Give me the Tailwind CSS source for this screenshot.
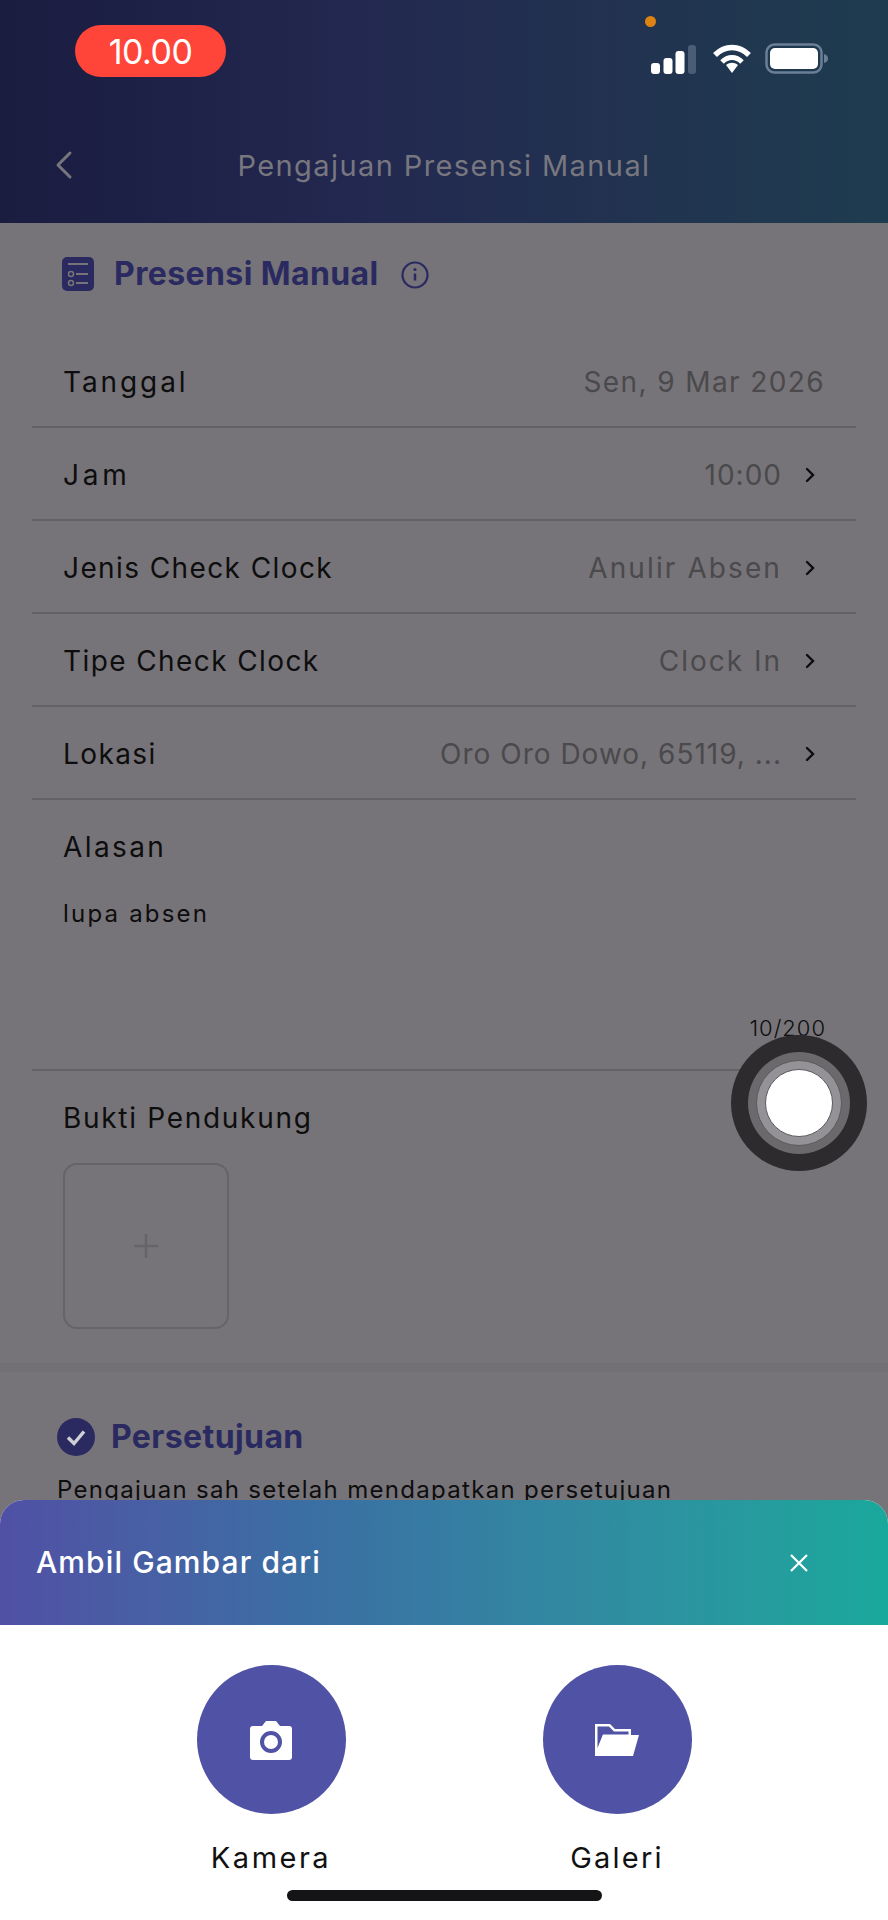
<!DOCTYPE html>
<html lang="en">
<head>
    <meta charset="UTF-8">
    <meta name="viewport" content="width=device-width, initial-scale=1.0">
    <title>Pengajuan Presensi Manual</title>
    <script src="https://cdn.jsdelivr.net/npm/@tailwindcss/browser@4"></script>
</head>
<body class="font-['Inter',sans-serif]">
<div class="relative w-[888px] h-[1920px] overflow-hidden bg-[#767478] text-[#0d0d0e]">

    <!-- Header -->
    <header class="h-[223px] bg-gradient-to-r from-[#1a1c40] via-[#232850] via-40% to-[#1e3c4f]">
        <div class="flex justify-between pl-[75px] pr-[60px] pt-[25px] h-[142px]">
            <div class="w-[151px] h-[52px] rounded-[26px] bg-[#ff453a] text-white text-[34px] flex items-center justify-center tracking-[-0.5px]">10.00</div>
            <div class="relative flex items-end gap-[14px] h-[49px]">
                <span class="absolute left-[-6px] top-[-9px] w-[11px] h-[11px] rounded-full bg-[#dd8213]"></span>
                <svg class="mr-[3px]" width="45" height="29" viewBox="0 0 45 29"><rect x="0" y="18" width="9" height="11" rx="3" fill="#fff"/><rect x="12.500" y="13" width="9" height="16" rx="3" fill="#fff"/><rect x="24.500" y="6" width="9" height="23" rx="3" fill="#fff"/><rect x="37" y="0" width="8" height="29" rx="3" fill="#4a5d74"/></svg>
                <svg width="38" height="30" viewBox="0 0 38 30"><path d="M2 11C12 1 26 1 36 11" stroke="#fff" stroke-width="5.500" fill="none"/><path d="M9 18c6-6 14-6 20 0" stroke="#fff" stroke-width="5" fill="none"/><path d="M13 21c4-3 8-3 12 0l-6 8z" fill="#fff"/></svg>
                <svg width="63" height="31" viewBox="0 0 63 31"><rect x="1.500" y="1.500" width="55" height="28" rx="8" fill="none" stroke="#6b7f95" stroke-width="2.500"/><rect x="5" y="5" width="48" height="21" rx="5" fill="#fff"/><path d="M59 11c3 1 4 2.500 4 4.500s-1 3.500-4 4.500z" fill="#6b7f95"/></svg>
            </div>
        </div>
        <div class="relative flex justify-center items-center h-[48px]">
            <svg class="absolute left-[54px] top-[8px]" width="20" height="30" viewBox="0 0 20 30"><path d="M16 3L4 15l12 12" stroke="#77767d" stroke-width="3" fill="none" stroke-linecap="round" stroke-linejoin="round"/></svg>
            <h1 class="text-[29px] tracking-[1.4px] text-[#78777f]">Pengajuan Presensi Manual</h1>
        </div>
    </header>

    <!-- Form card -->
    <section class="h-[1140px]">
        <div class="flex items-center pl-[62px] pt-[18px] h-[84px]">
            <svg width="32" height="34" viewBox="0 0 32 34"><rect width="32" height="34" rx="5" fill="#2a2a61"/><path d="M6 7h20M14 17h12M14 26h12" stroke="#767478" stroke-width="2"/><circle cx="9" cy="17" r="2.500" fill="none" stroke="#767478" stroke-width="1.500"/><circle cx="9" cy="26" r="2.500" fill="none" stroke="#767478" stroke-width="1.500"/></svg>
            <h2 class="ml-[20px] text-[32px] font-bold tracking-[0.4px] text-[#2a2a61]">Presensi Manual</h2>
            <svg class="ml-[22px] mt-[2px]" width="28" height="28" viewBox="0 0 28 28"><circle cx="14" cy="14" r="12.500" fill="none" stroke="#2a2a61" stroke-width="2.200"/><path d="M14 12.500v7" stroke="#2a2a61" stroke-width="2.500"/><circle cx="14" cy="8.500" r="1.600" fill="#2a2a61"/></svg>
        </div>

        <div class="mx-[32px] mt-[28px] text-[28px] tracking-[1.4px]">
            <div class="h-[93px] pt-[3px] flex items-center justify-between border-b-2 border-[#646266] px-[31px]">
                <span class="tracking-[2.900px]">Tanggal</span>
                <span class="text-[#4a494c]">Sen, 9 Mar 2026</span>
            </div>
            <div class="h-[93px] pt-[3px] flex items-center justify-between border-b-2 border-[#646266] px-[31px]">
                <span class="tracking-[3.800px]">Jam</span>
                <span class="flex items-center text-[#4a494c] tracking-[1px]">10:00
                    <svg class="ml-[22px] mr-[9px]" width="12" height="18" viewBox="0 0 12 18"><path d="M3 3l6 6-6 6" stroke="#0d0d0e" stroke-width="2.400" fill="none" stroke-linecap="round"/></svg>
                </span>
            </div>
            <div class="h-[93px] pt-[3px] flex items-center justify-between border-b-2 border-[#646266] px-[31px]">
                <span>Jenis Check Clock</span>
                <span class="flex items-center text-[#4a494c] tracking-[2.100px]">Anulir Absen
                    <svg class="ml-[22px] mr-[9px]" width="12" height="18" viewBox="0 0 12 18"><path d="M3 3l6 6-6 6" stroke="#0d0d0e" stroke-width="2.400" fill="none" stroke-linecap="round"/></svg>
                </span>
            </div>
            <div class="h-[93px] pt-[3px] flex items-center justify-between border-b-2 border-[#646266] px-[31px]">
                <span>Tipe Check Clock</span>
                <span class="flex items-center text-[#4a494c] tracking-[2px]">Clock In
                    <svg class="ml-[22px] mr-[9px]" width="12" height="18" viewBox="0 0 12 18"><path d="M3 3l6 6-6 6" stroke="#0d0d0e" stroke-width="2.400" fill="none" stroke-linecap="round"/></svg>
                </span>
            </div>
            <div class="h-[93px] pt-[3px] flex items-center justify-between border-b-2 border-[#646266] px-[31px]">
                <span>Lokasi</span>
                <span class="flex items-center text-[#4a494c] tracking-[1px]">Oro Oro Dowo, 65119, ...
                    <svg class="ml-[22px] mr-[9px]" width="12" height="18" viewBox="0 0 12 18"><path d="M3 3l6 6-6 6" stroke="#0d0d0e" stroke-width="2.400" fill="none" stroke-linecap="round"/></svg>
                </span>
            </div>
            <div class="h-[271px] border-b-2 border-[#646266] px-[31px] pt-[26px]">
                <div class="tracking-[2.400px]">Alasan</div>
                <p class="mt-[28px] text-[24px] tracking-[2.200px]">lupa absen</p>
                <p class="mt-[80px] text-right text-[22px] font-light tracking-[1px] mr-[-1px]">10/200</p>
            </div>
            <div class="px-[31px] pt-[26px]">
                <div class="tracking-[1.700px]">Bukti Pendukung</div>
                <div class="mt-[24px] w-[166px] h-[166px] rounded-[14px] border-2 border-[#666468] flex items-center justify-center">
                    <svg width="26" height="26" viewBox="0 0 26 26"><path d="M13 1v24M1 13h24" stroke="#666468" stroke-width="2.500"/></svg>
                </div>
            </div>
        </div>
    </section>
    <div class="h-[9px] bg-[#727074]"></div>

    <!-- Persetujuan -->
    <section class="pl-[57px] pt-[41px]">
        <div class="flex items-center">
            <svg width="38" height="38" viewBox="0 0 38 38"><circle cx="19" cy="19" r="19" fill="#2a2a61"/><path d="M11 19.500l6 6 10-12" stroke="#cfcfd6" stroke-width="3.500" fill="none"/></svg>
            <h2 class="ml-[16px] text-[32px] font-bold tracking-[0.4px] text-[#2a2a61]">Persetujuan</h2>
        </div>
        <p class="mt-[11px] text-[24px] tracking-[1.300px]">Pengajuan sah setelah mendapatkan persetujuan</p>
    </section>

    <!-- Assistive touch -->
    <div class="absolute left-[731px] top-[1035px] w-[136px] h-[136px] rounded-full bg-[#2d2b2e] flex items-center justify-center">
        <div class="w-[102px] h-[102px] rounded-full bg-[#6b696c] flex items-center justify-center">
            <div class="w-[86px] h-[86px] rounded-full bg-[#949296] border border-[#5c5a5d] flex items-center justify-center">
                <div class="w-[68px] h-[68px] rounded-full bg-white border border-[#5c5a5d]"></div>
            </div>
        </div>
    </div>

    <!-- Bottom sheet -->
    <div class="absolute left-0 right-0 top-[1500px] bottom-0 bg-white rounded-t-[24px] overflow-hidden">
        <div class="h-[125px] bg-gradient-to-r from-[#5050a5] via-[#3a6fa3] via-35% to-[#19a89c] flex items-center justify-between pl-[36px] pr-[79px] text-white">
            <span class="text-[30px] font-medium tracking-[1.100px]">Ambil Gambar dari</span>
            <svg width="20" height="20" viewBox="0 0 20 20"><path d="M2 2l16 16M18 2L2 18" stroke="#fff" stroke-width="2.200"/></svg>
        </div>
        <div class="flex justify-center gap-[197px] pt-[40px]">
            <div class="w-[149px] flex flex-col items-center">
                <div class="w-[149px] h-[149px] rounded-full bg-[#4f52a5] flex items-center justify-center">
                    <svg width="42" height="40" viewBox="0 0 42 40"><path d="M3 6h9l4-5h10l4 5h9a3 3 0 0 1 3 3v28a3 3 0 0 1-3 3H3a3 3 0 0 1-3-3V9a3 3 0 0 1 3-3z" fill="#fff"/><circle cx="21" cy="22" r="9" fill="#fff" stroke="#4f52a5" stroke-width="4"/></svg>
                </div>
                <span class="mt-[22px] text-[29px] tracking-[2.500px] text-[#111]">Kamera</span>
            </div>
            <div class="w-[149px] flex flex-col items-center">
                <div class="w-[149px] h-[149px] rounded-full bg-[#4f52a5] flex items-center justify-center">
                    <svg width="44" height="32" viewBox="0 0 44 32"><path d="M0 0h15l5 5h16v7H10L2 32H0z" fill="#fff"/><path d="M2.500 2.500h11.500l5 5h14.500v3H8L2.500 24z" fill="#4f52a5"/><path d="M0 32L8 11h36l-6 21z" fill="#fff"/></svg>
                </div>
                <span class="mt-[22px] text-[29px] tracking-[2.200px] text-[#111]">Galeri</span>
            </div>
        </div>
        <div class="absolute left-[287px] top-[390px] w-[315px] h-[11px] rounded-full bg-[#141315]"></div>
    </div>
</div>
</body>
</html>
